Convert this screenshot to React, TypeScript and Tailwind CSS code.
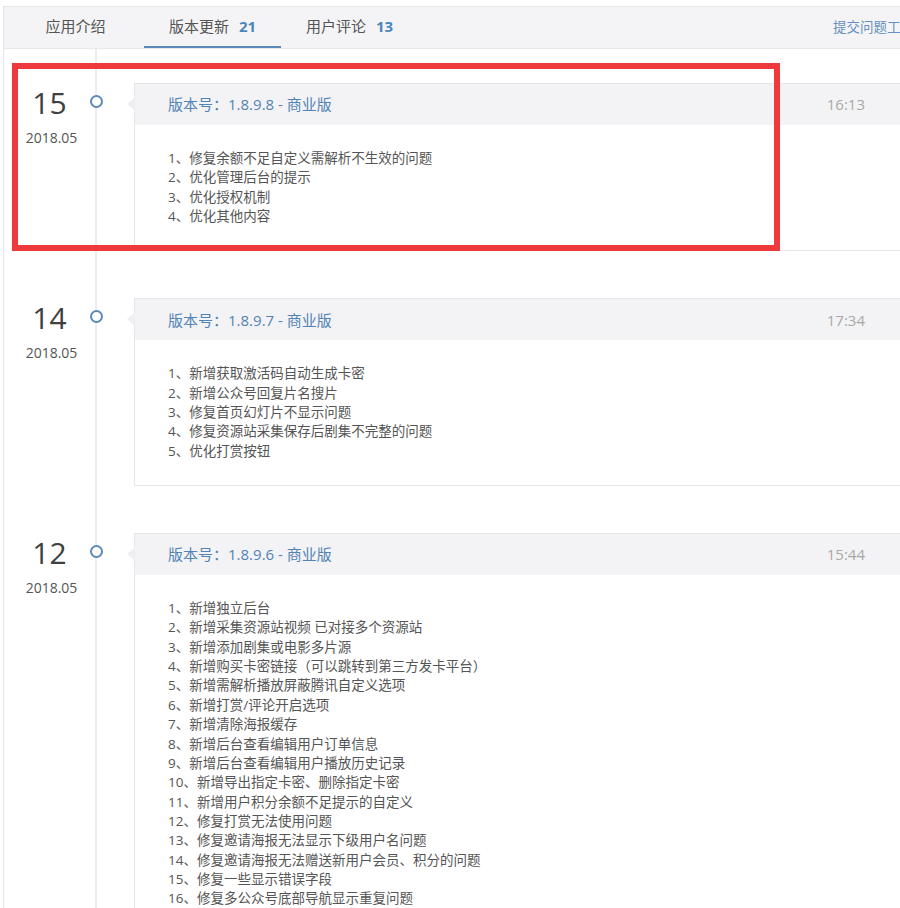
import React from "react";

const releases = [
  {
    day: "15",
    month: "2018.05",
    version: "1.8.9.8",
    time: "16:13",
    items: [
      "修复余额不足自定义需解析不生效的问题",
      "优化管理后台的提示",
      "优化授权机制",
      "优化其他内容",
    ],
  },
  {
    day: "14",
    month: "2018.05",
    version: "1.8.9.7",
    time: "17:34",
    items: [
      "新增获取激活码自动生成卡密",
      "新增公众号回复片名搜片",
      "修复首页幻灯片不显示问题",
      "修复资源站采集保存后剧集不完整的问题",
      "优化打赏按钮",
    ],
  },
  {
    day: "12",
    month: "2018.05",
    version: "1.8.9.6",
    time: "15:44",
    items: [
      "新增独立后台",
      "新增采集资源站视频 已对接多个资源站",
      "新增添加剧集或电影多片源",
      "新增购买卡密链接（可以跳转到第三方发卡平台）",
      "新增需解析播放屏蔽腾讯自定义选项",
      "新增打赏/评论开启选项",
      "新增清除海报缓存",
      "新增后台查看编辑用户订单信息",
      "新增后台查看编辑用户播放历史记录",
      "新增导出指定卡密、删除指定卡密",
      "新增用户积分余额不足提示的自定义",
      "修复打赏无法使用问题",
      "修复邀请海报无法显示下级用户名问题",
      "修复邀请海报无法赠送新用户会员、积分的问题",
      "修复一些显示错误字段",
      "修复多公众号底部导航显示重复问题",
    ],
  },
];

const tabs = [
  { label: "应用介绍" },
  { label: "版本更新", count: "21", active: true },
  { label: "用户评论", count: "13" },
];

export default function App() {
  return (
    <div className="w-[900px] h-[908px] overflow-hidden bg-white pt-[6px] font-['Open_Sans','Noto_Sans_CJK_SC',sans-serif]">
      <div className="w-[930px] ml-[3px] border-l border-t border-[#e6e6e8]">
        {/* tab bar */}
        <div className="h-[42px] flex items-stretch bg-[#f4f4f6] border-b border-[#e8e8ea] pl-[3px] pr-[19px]">
          {tabs.map((tab) => (
            <div
              key={tab.label}
              className={
                tab.active
                  ? "w-[137px] flex items-center justify-center border-b-2 border-[#5b8ab8] text-[15px] text-[#555]"
                  : "w-[137px] flex items-center justify-center border-b-2 border-transparent text-[15px] text-[#555]"
              }
            >
              <span>{tab.label}</span>
              {tab.count && (
                <span className="ml-[10px] font-bold text-[#4a86bb]">
                  {tab.count}
                </span>
              )}
            </div>
          ))}
          <div className="ml-auto flex items-center text-[13.5px] text-[#6690bd]">
            提交问题工单
          </div>
        </div>

        {/* timeline */}
        {releases.map((r, i) => (
          <div key={r.version} className="flex items-stretch relative">
            <div className="w-[91px] shrink-0 text-center">
              <div className="mt-[36px] text-[30px] leading-[36px] text-[#404040]">
                {r.day}
              </div>
              <div className="mt-[7px] pl-[4px] text-[14px] leading-[20px] text-[#555]">
                {r.month}
              </div>
            </div>
            <div className="w-[2px] shrink-0 bg-[#ebedf0] flex flex-col items-center pt-[46px]">
              <div className="w-[13px] h-[13px] shrink-0 rounded-full border-2 border-[#5b8ab8] bg-white" />
            </div>
            <div className="flex-1 pl-[37px] pr-[27px] pt-[34px] pb-[13px]">
              <div className="relative border border-[#e6e6ea] bg-white">
                <div className="absolute left-[-8px] top-[13px] w-0 h-0 border-y-[7px] border-y-transparent border-r-[8px] border-r-[#efeff2]" />
                <div className="h-[41px] flex items-center justify-between bg-[#f3f3f5] pl-[33px] pr-[40px]">
                  <span className="text-[15px] text-[#5183b5]">
                    版本号：{r.version} - 商业版
                  </span>
                  <span className="text-[15px] text-[#a8a8a8]">{r.time}</span>
                </div>
                <ul className="pl-[33px] pt-[24px] pb-[24px] text-[13.5px] leading-[19.35px] text-[#555]">
                  {r.items.map((item, n) => (
                    <li key={n}>
                      {n + 1}、{item}
                    </li>
                  ))}
                </ul>
              </div>
            </div>
            {i === 0 && (
              <div className="absolute left-[8px] top-[14px] w-[768px] h-[188px] border-[6px] border-[#ef3a3d] pointer-events-none" />
            )}
          </div>
        ))}
      </div>
    </div>
  );
}
